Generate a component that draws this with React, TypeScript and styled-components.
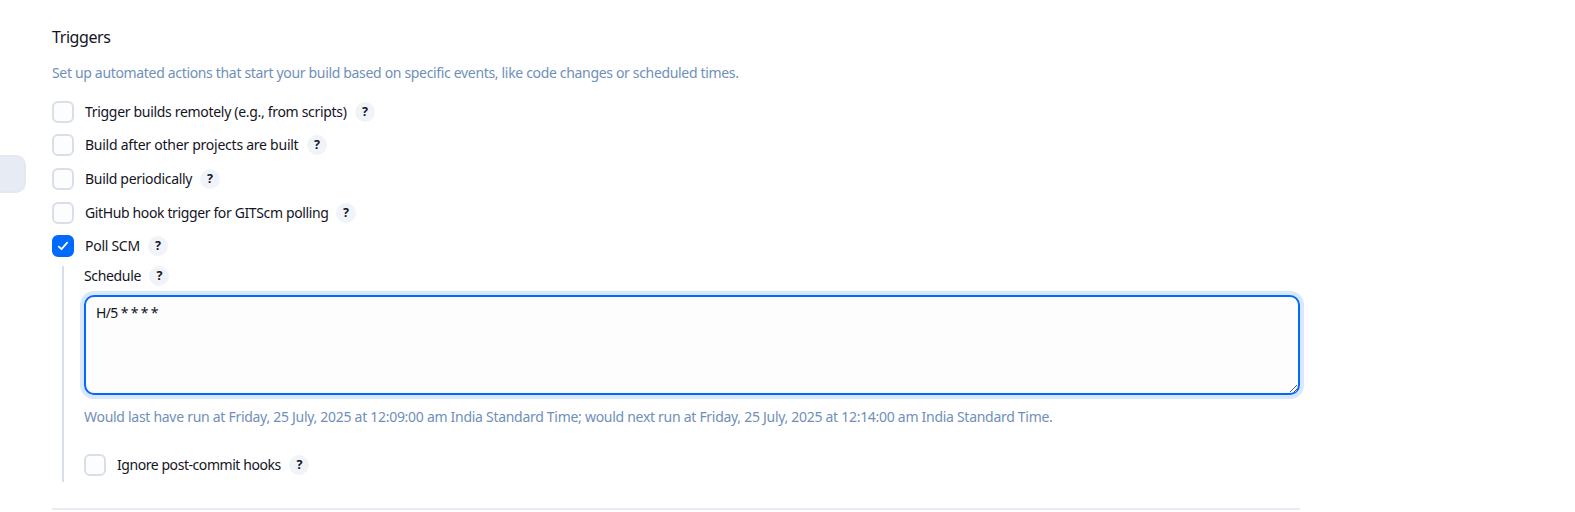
import React from 'react';
import styled, { createGlobalStyle } from 'styled-components';

const GlobalStyle = createGlobalStyle`
  *, *::before, *::after { box-sizing: border-box; }
  body {
    margin: 0;
    background: #ffffff;
    color: #14141f;
    font: 400 14px/20px "Noto Sans", "Open Sans", sans-serif;
    overflow: hidden;
  }
`;

const Page = styled.div`
  display: flex;
  align-items: flex-start;
  height: 512px;
`;

const SideRail = styled.aside`
  width: 52px;
  flex: none;
  padding-top: 155px;
`;

const ActiveTask = styled.div`
  width: 26px;
  height: 38px;
  background: #e7ecf4;
  border: 2px solid #e4e8ef;
  border-left: 0;
  border-radius: 0 10px 10px 0;
`;

const Section = styled.section`
  width: 1248px;
  height: 510px;
  flex: none;
  padding-top: 25px;
  border-bottom: 2px solid #e7ebf3;
`;

const Title = styled.h2`
  margin: 0;
  font-size: 16px;
  font-weight: 400;
  line-height: 24px;
  letter-spacing: -0.414px;
`;

const Hint = styled.p<{ $tracking: number }>`
  margin: 0;
  line-height: 20px;
  color: #6f8fba;
  white-space: nowrap;
  letter-spacing: ${(p) => p.$tracking}px;
`;

const Description = styled(Hint)`
  margin-top: 14px;
`;

const TriggerList = styled.div`
  display: flex;
  flex-direction: column;
  gap: 11.6px;
  margin-top: 17.8px;
`;

const OptionRow = styled.div`
  display: flex;
  align-items: center;
  height: 22px;
`;

const Checkbox = styled.span<{ $checked?: boolean }>`
  display: flex;
  align-items: center;
  justify-content: center;
  flex: none;
  width: 22px;
  height: 22px;
  margin-right: 11px;
  border: 2px solid ${(p) => (p.$checked ? '#006aff' : '#d9deeb')};
  border-radius: 6px;
  background: ${(p) => (p.$checked ? '#006aff' : '#fdfdfd')};
`;

const Label = styled.span<{ $width: number; $tracking: number }>`
  width: ${(p) => p.$width}px;
  flex: none;
  white-space: nowrap;
  letter-spacing: ${(p) => p.$tracking}px;
`;

const HelpButton = styled.button`
  display: flex;
  align-items: center;
  justify-content: center;
  flex: none;
  width: 20px;
  height: 20px;
  margin: 0 0 0 8px;
  padding: 0 0 0 1px;
  border: 0;
  border-radius: 50%;
  background: #f0f4f9;
  color: #14141f;
  font: 700 12.5px/20px "Noto Sans", sans-serif;
`;

const Nested = styled.div`
  margin: 8.8px 0 0 10px;
  padding-left: 20px;
  height: 216px;
  border-left: 2px solid #d9deeb;
`;

const FieldHeader = styled.div`
  display: flex;
  align-items: center;
  height: 20px;
`;

const ScheduleInput = styled.textarea`
  display: block;
  width: 1216px;
  height: 100px;
  margin: 9px 0 0;
  padding: 6px 10px;
  border: 2px solid #006aff;
  border-radius: 10px;
  outline: none;
  box-shadow: 0 0 0 4px #d9e7ff;
  background: #fdfdfd;
  color: #14141f;
  font: inherit;
  letter-spacing: -0.65px;
  resize: vertical;
`;

const RunPreview = styled(Hint)`
  margin: 12px 0 27px;
`;

const CheckMark = () => (
  <svg width="12" height="12" viewBox="0 0 12 12" fill="none" stroke="#fff" strokeWidth="1.8" strokeLinecap="round" strokeLinejoin="round">
    <path d="M1.8 6.6 4.5 9.2 10.2 2.6" />
  </svg>
);

type OptionProps = { label: string; width: number; tracking: number; checked?: boolean };

const Option = ({ label, width, tracking, checked }: OptionProps) => (
  <OptionRow>
    <Checkbox $checked={checked} role="checkbox" aria-checked={!!checked}>
      {checked && <CheckMark />}
    </Checkbox>
    <Label $width={width} $tracking={tracking}>{label}</Label>
    <HelpButton>?</HelpButton>
  </OptionRow>
);

const triggers: OptionProps[] = [
  { label: 'Trigger builds remotely (e.g., from scripts)', width: 262, tracking: -0.31 },
  { label: 'Build after other projects are built', width: 214, tracking: -0.25 },
  { label: 'Build periodically', width: 107, tracking: -0.31 },
  { label: 'GitHub hook trigger for GITScm polling', width: 243, tracking: -0.37 },
  { label: 'Poll SCM', width: 55, tracking: -0.27, checked: true },
];

export default function App() {
  return (
    <>
      <GlobalStyle />
      <Page>
        <SideRail>
          <ActiveTask />
        </SideRail>
        <Section>
          <Title>Triggers</Title>
          <Description $tracking={-0.33}>
            Set up automated actions that start your build based on specific events, like code changes or scheduled times.
          </Description>
          <TriggerList>
            {triggers.map((t) => (
              <Option key={t.label} {...t} width={t.width - 0.4} />
            ))}
          </TriggerList>
          <Nested>
            <FieldHeader>
              <Label $width={57} $tracking={-0.34}>Schedule</Label>
              <HelpButton>?</HelpButton>
            </FieldHeader>
            <ScheduleInput defaultValue="H/5 * * * *" spellCheck={false} />
            <RunPreview $tracking={-0.287}>
              Would last have run at Friday, 25 July, 2025 at 12:09:00 am India Standard Time; would next run at Friday, 25 July, 2025 at 12:14:00 am India Standard Time.
            </RunPreview>
            <Option label="Ignore post-commit hooks" width={164} tracking={-0.44} />
          </Nested>
        </Section>
      </Page>
    </>
  );
}
